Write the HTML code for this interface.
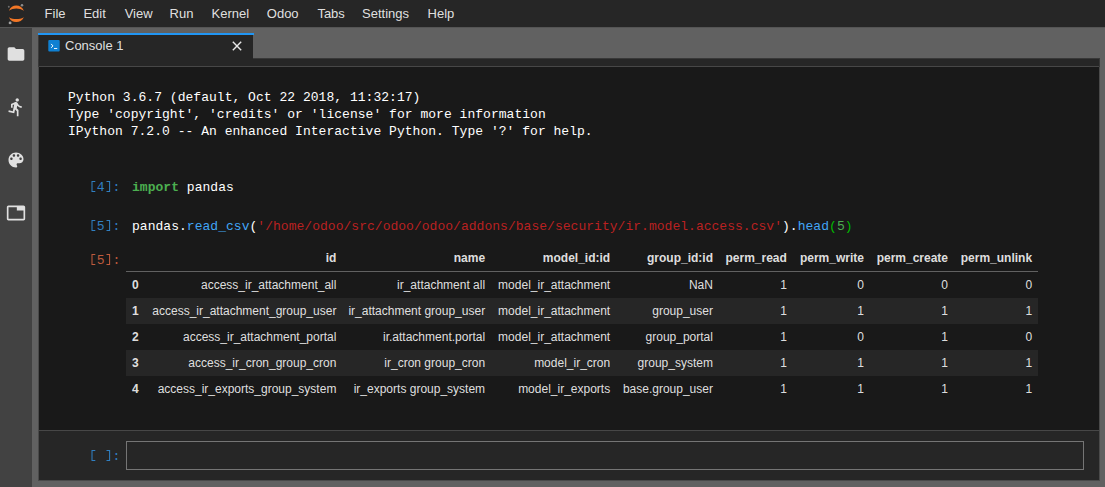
<!DOCTYPE html>
<html><head><meta charset="utf-8">
<style>
*{box-sizing:border-box;margin:0;padding:0}
html,body{width:1105px;height:487px;overflow:hidden;background:#616161;font-family:"Liberation Sans",sans-serif;}
.abs{position:absolute}
#menubar{left:0;top:0;width:1105px;height:28px;background:#262626;border-bottom:1px solid #555}
.mi{position:absolute;top:6px;font-size:13px;line-height:16px;color:rgba(255,255,255,0.87);white-space:pre}
#sidebar{left:0;top:28px;width:32px;height:459px;background:#424242}
#console{left:38px;top:58px;width:1062px;height:423px;background:#191919;border:1px solid #383838}
#toolbar{left:39px;top:59px;width:1060px;height:8px;background:#262626;border-bottom:1px solid #474747}
#inputarea{left:39px;top:430px;width:1060px;height:50px;background:#262626;border-top:1px solid #474747}
#cborder{left:38px;top:67px;width:1062px;height:414px;border:1px solid #4a4a4a;border-top:none}
#tab{left:38px;top:35px;width:215px;height:24px;background:#262626;border-left:1px solid #3c3c3c}
#tabline{left:38px;top:33px;width:216px;height:2px;background:#2196f3}
#tabicon{left:48px;top:40px;width:12px;height:12px;background:#1b84d0;border-radius:1.5px}
#tabtxt{left:65px;top:38px;font-size:13px;line-height:16px;color:rgba(255,255,255,0.87);white-space:pre}
#inbox{left:126px;top:441px;width:958px;height:29px;background:#262626;border:1px solid #757575}
.mono{position:absolute;font-family:"Liberation Mono",monospace;font-size:13px;line-height:17px;letter-spacing:0.03px;white-space:pre;color:#fff}
.inp{color:#307fc1}
.outp{color:#bf5b3d}
.kw{color:#4caf50;font-weight:bold}
.prop{color:#42a5f5}
.str{color:#ba2121}
.num{color:#4caf50}
.mb{color:#0b0}
.br{display:inline-block;width:7.83px;height:17px;vertical-align:top}
.br svg{display:block}
table{position:absolute;left:126px;top:245px;width:912.1px;table-layout:fixed;border-collapse:collapse;border-spacing:0;font-size:12px;color:rgba(255,255,255,0.87)}
th,td{text-align:right;vertical-align:middle;padding:6px;line-height:14px;white-space:nowrap;border:none}
th{font-weight:bold}
thead{border-bottom:1px solid #616161}
tbody tr:nth-child(odd){background:#191919}
tbody tr:nth-child(even){background:#262626}
tbody th{text-align:left}
</style></head><body>
<div id="menubar" class="abs"></div>
<svg class="abs" style="left:0;top:0" width="32" height="27" viewBox="0 0 32 27">
  <path d="M8.9 10.8 C10.5 7.0 13 5.5 16.3 5.5 C19.6 5.5 22.1 7.0 23.9 10.8 C21.3 9.3 19 8.6 16.3 8.6 C13.6 8.6 11.3 9.3 8.9 10.8Z" fill="#f37726"/>
  <path d="M8.9 17.2 C10.5 20.8 13 21.9 16.3 21.9 C19.6 21.9 22.1 20.8 23.9 17.2 C21.3 18.6 19 19.1 16.3 19.1 C13.6 19.1 11.3 18.6 8.9 17.2Z" fill="#f37726"/>
  <circle cx="22" cy="5.2" r="1.25" fill="#8c8c8c"/>
  <circle cx="8.8" cy="6.8" r="0.95" fill="#6f6f6f"/>
  <circle cx="10.1" cy="22.9" r="1.45" fill="#a0a0a0"/>
</svg>
<div class="mi" style="left:44.6px">File</div>
<div class="mi" style="left:83.4px">Edit</div>
<div class="mi" style="left:124.7px">View</div>
<div class="mi" style="left:169.6px">Run</div>
<div class="mi" style="left:211.6px">Kernel</div>
<div class="mi" style="left:266.8px">Odoo</div>
<div class="mi" style="left:317.4px">Tabs</div>
<div class="mi" style="left:362.1px">Settings</div>
<div class="mi" style="left:427.6px">Help</div>

<div id="sidebar" class="abs"></div>
<svg class="abs" style="left:6px;top:44px" width="20" height="20" viewBox="0 0 24 24"><path fill="#e0e0e0" d="M10 4H4c-1.1 0-1.99.9-1.99 2L2 18c0 1.1.9 2 2 2h16c1.1 0 2-.9 2-2V8c0-1.1-.9-2-2-2h-8l-2-2z"/></svg>
<svg class="abs" style="left:6px;top:97px" width="20" height="20" viewBox="0 0 24 24"><path fill="#e0e0e0" d="M13.49 5.48c1.1 0 2-.9 2-2s-.9-2-2-2-2 .9-2 2 .9 2 2 2zm-3.6 13.9l1-4.4 2.1 2v6h2v-7.5l-2.1-2 .6-3c1.3 1.5 3.3 2.5 5.5 2.5v-2c-1.9 0-3.5-1-4.3-2.4l-1-1.6c-.4-.6-1-1-1.7-1-.3 0-.5.1-.8.1l-5.2 2.2v4.7h2v-3.4l1.8-.7-1.6 8.1-4.9-1-.4 2 7 1.4z"/></svg>
<svg class="abs" style="left:6px;top:150px" width="20" height="20" viewBox="0 0 24 24"><path fill="#e0e0e0" d="M12 3c-4.97 0-9 4.03-9 9s4.03 9 9 9c.83 0 1.5-.67 1.5-1.5 0-.39-.15-.74-.39-1.01-.23-.26-.38-.61-.38-.99 0-.83.67-1.5 1.5-1.5H16c2.76 0 5-2.240 5-5 0-4.42-4.030-8-9-8zm-5.5 9c-.83 0-1.5-.67-1.5-1.5S5.67 9 6.5 9 8 9.67 8 10.5 7.33 12 6.5 12zm3-4C8.67 8 8 7.33 8 6.5S8.67 5 9.5 5s1.5.67 1.5 1.5S10.33 8 9.5 8zm5 0c-.83 0-1.5-.67-1.5-1.5S13.670 5 14.5 5s1.5.67 1.5 1.5S15.33 8 14.5 8zm3 4c-.83 0-1.5-.67-1.5-1.5S16.67 9 17.5 9s1.5.67 1.5 1.5-.67 1.5-1.5 1.5z"/></svg>
<svg class="abs" style="left:6px;top:203px" width="20" height="20" viewBox="0 0 24 24"><path fill="#e0e0e0" d="M21 3H3c-1.1 0-2 .9-2 2v14c0 1.1.9 2 2 2h18c1.1 0 2-.9 2-2V5c0-1.1-.9-2-2-2zm0 16H3V5h10v4h8v10z"/></svg>

<div id="console" class="abs"></div>
<div id="toolbar" class="abs"></div>
<div id="inputarea" class="abs"></div>
<div id="cborder" class="abs"></div>
<div id="tab" class="abs"></div><div id="tabline" class="abs"></div>
<svg class="abs" style="left:48px;top:40px" width="12" height="12" viewBox="0 0 12 12"><rect x="0.3" y="0.1" width="11.4" height="11.5" rx="1" fill="#0f80d2"/><path d="M3.4 4.2 L4.9 5.9 L3.5 7.5" stroke="#fff" stroke-width="1" fill="none" stroke-linecap="round"/><rect x="6" y="8.1" width="3.2" height="0.9" fill="#fff"/></svg>
<div id="tabtxt" class="abs">Console 1</div>
<svg class="abs" style="left:232px;top:41px" width="10" height="10" viewBox="0 0 10 10"><path d="M0.8 0.8 L9.2 9.2 M9.2 0.8 L0.8 9.2" stroke="#e8e8e8" stroke-width="1.4"/></svg>


<div class="mono" style="left:68px;top:89px">Python 3.6.7 (default, Oct 22 2018, 11:32:17)
Type 'copyright', 'credits' or 'license' for more information
IPython 7.2.0 -- An enhanced Interactive Python. Type '?' for help.</div>

<div class="mono inp" style="left:89px;top:179px"><span class="br"><svg width="8" height="17" viewBox="0 0 8 17"><path d="M6.3 2.5H3V12.5H6.3" stroke="currentColor" stroke-width="1.05" fill="none"/></svg></span>4<span class="br"><svg width="8" height="17" viewBox="0 0 8 17"><path d="M1.5 2.5H4.6V12.5H1.5" stroke="currentColor" stroke-width="1.05" fill="none"/></svg></span>:</div>
<div class="mono" style="left:132px;top:179px"><span class="kw">import</span> pandas</div>

<div class="mono inp" style="left:89px;top:218px"><span class="br"><svg width="8" height="17" viewBox="0 0 8 17"><path d="M6.3 2.5H3V12.5H6.3" stroke="currentColor" stroke-width="1.05" fill="none"/></svg></span>5<span class="br"><svg width="8" height="17" viewBox="0 0 8 17"><path d="M1.5 2.5H4.6V12.5H1.5" stroke="currentColor" stroke-width="1.05" fill="none"/></svg></span>:</div>
<div class="mono" style="left:132px;top:218px">pandas.<span class="prop">read_csv</span>(<span class="str">'/home/odoo/src/odoo/odoo/addons/base/security/ir.model.access.csv'</span>).<span class="prop">head</span><span class="mb">(</span><span class="num">5</span><span class="mb">)</span></div>

<div class="mono outp" style="left:89px;top:252px"><span class="br"><svg width="8" height="17" viewBox="0 0 8 17"><path d="M6.3 2.5H3V12.5H6.3" stroke="currentColor" stroke-width="1.05" fill="none"/></svg></span>5<span class="br"><svg width="8" height="17" viewBox="0 0 8 17"><path d="M1.5 2.5H4.6V12.5H1.5" stroke="currentColor" stroke-width="1.05" fill="none"/></svg></span>:</div>

<table>
<colgroup><col style="width:20px"><col style="width:196.4px"><col style="width:148.7px"><col style="width:125.1px"><col style="width:102.8px"><col style="width:73.9px"><col style="width:77.1px"><col style="width:84.1px"><col style="width:84px"></colgroup>
<thead><tr><th></th><th>id</th><th>name</th><th>model_id:id</th><th>group_id:id</th><th>perm_read</th><th>perm_write</th><th>perm_create</th><th>perm_unlink</th></tr></thead>
<tbody>
<tr><th>0</th><td>access_ir_attachment_all</td><td>ir_attachment all</td><td>model_ir_attachment</td><td>NaN</td><td>1</td><td>0</td><td>0</td><td>0</td></tr>
<tr><th>1</th><td>access_ir_attachment_group_user</td><td>ir_attachment group_user</td><td>model_ir_attachment</td><td>group_user</td><td>1</td><td>1</td><td>1</td><td>1</td></tr>
<tr><th>2</th><td>access_ir_attachment_portal</td><td>ir.attachment.portal</td><td>model_ir_attachment</td><td>group_portal</td><td>1</td><td>0</td><td>1</td><td>0</td></tr>
<tr><th>3</th><td>access_ir_cron_group_cron</td><td>ir_cron group_cron</td><td>model_ir_cron</td><td>group_system</td><td>1</td><td>1</td><td>1</td><td>1</td></tr>
<tr><th>4</th><td>access_ir_exports_group_system</td><td>ir_exports group_system</td><td>model_ir_exports</td><td>base.group_user</td><td>1</td><td>1</td><td>1</td><td>1</td></tr>
</tbody>
</table>

<div id="inbox" class="abs"></div>
<div class="mono inp" style="left:89px;top:448px"><span class="br"><svg width="8" height="17" viewBox="0 0 8 17"><path d="M6.3 2.5H3V12.5H6.3" stroke="currentColor" stroke-width="1.05" fill="none"/></svg></span> <span class="br"><svg width="8" height="17" viewBox="0 0 8 17"><path d="M1.5 2.5H4.6V12.5H1.5" stroke="currentColor" stroke-width="1.05" fill="none"/></svg></span>:</div>
</body></html>
